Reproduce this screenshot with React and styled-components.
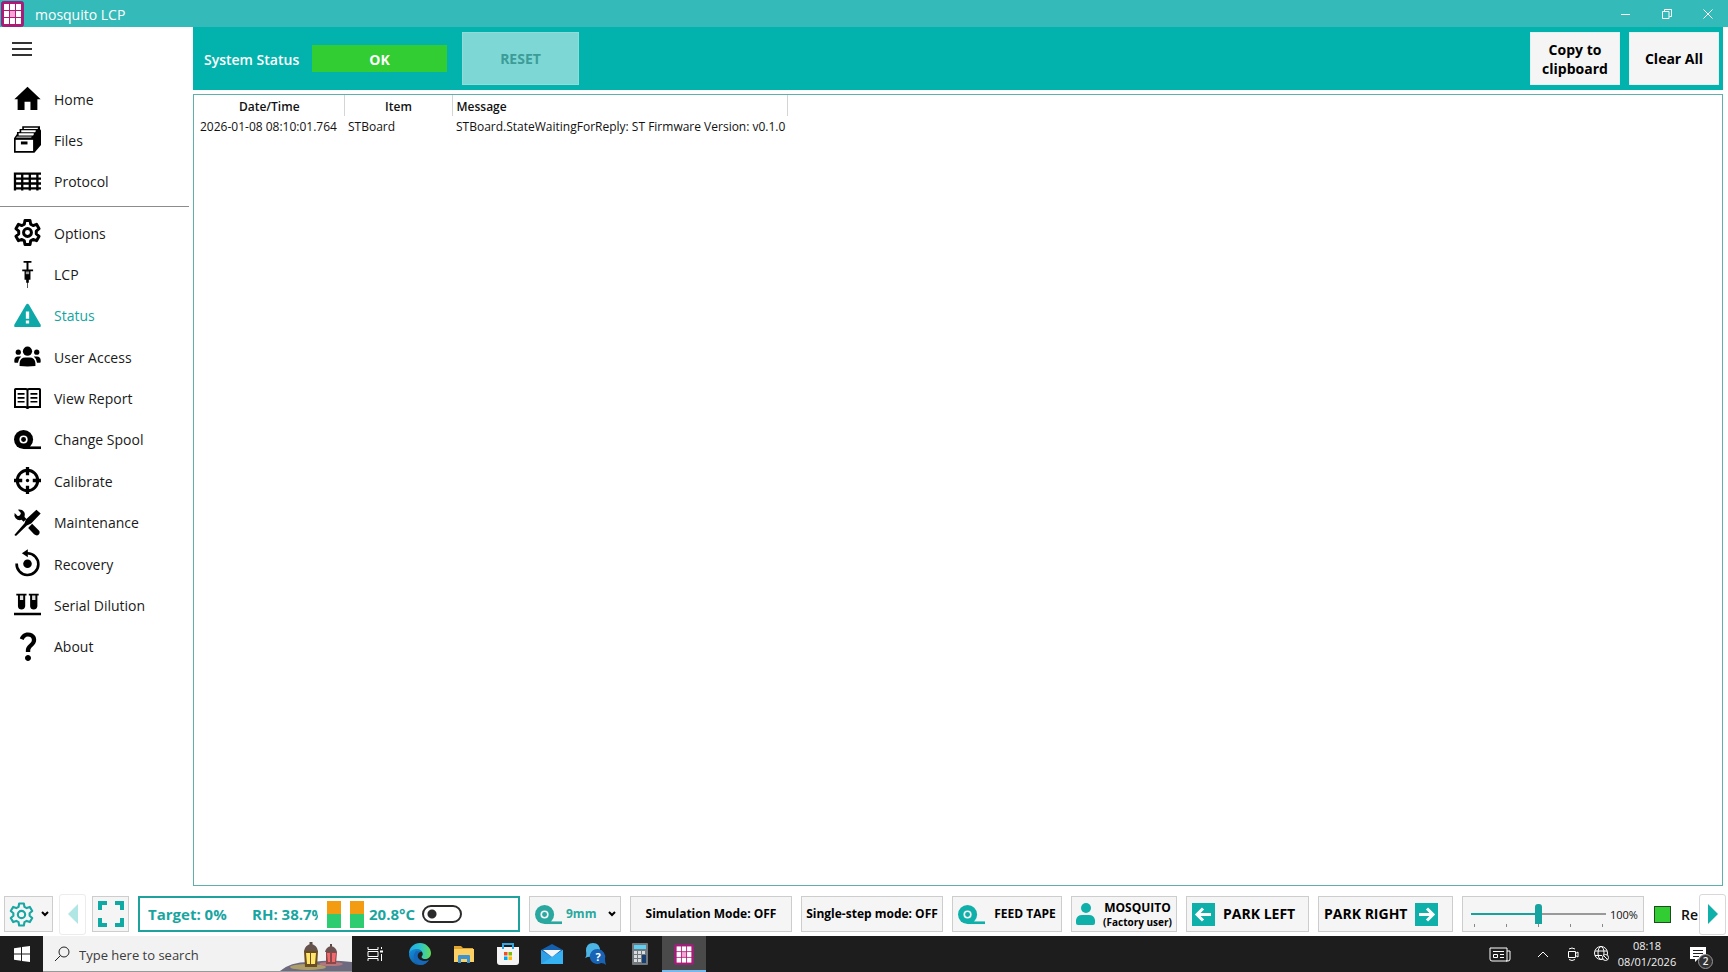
import React, { useState } from 'react';
import styled, { createGlobalStyle } from 'styled-components';
import { MdQuestionMark } from 'react-icons/md';

const TEAL = '#02b3ad';

const GlobalStyle = createGlobalStyle`
    * {
        box-sizing: border-box;
    }

    body {
        margin: 0;
        background: #fff;
        color: #111;
        font-family: "Open Sans", "Noto Sans", sans-serif;
        font-size: 14px;
    }

    button, input {
        font-family: inherit;
        color: inherit;
    }

    svg {
        display: block;
        flex: none;
        overflow: visible;
    }
`;

// Layout
const Window = styled.div`
    display: flex;
    flex-direction: column;
    height: 100vh;
    overflow: hidden;
`;

const TitleBar = styled.header`
    display: flex;
    align-items: center;
    height: 27px;
    flex: none;
    padding-left: 1px;
    background: #35baba;
    color: #fff;
`;

const Title = styled.h1`
    flex: 1;
    margin: 0;
    padding-left: 11px;
    padding-top: 2px;
    font-size: 14px;
    font-weight: 500;
`;

const WindowButton = styled.button`
    display: flex;
    align-items: center;
    justify-content: center;
    width: 41px;
    height: 27px;
    padding: 0;
    border: none;
    background: none;
    color: #fff;
`;

const Body = styled.div`
    display: flex;
    flex: 1;
    min-height: 0;
`;

const Sidebar = styled.nav`
    width: 193px;
    flex: none;
    padding-right: 4px;
`;

const MenuButton = styled.button`
    display: block;
    height: 51px;
    padding: 0 0 7px 12px;
    border: none;
    background: none;
`;

const NavList = styled.ul`
    display: flex;
    flex-direction: column;
    height: ${(props) => props.$height};
    margin: 0;
    padding: 0;
    list-style: none;
`;

const NavItem = styled.li`
    flex: 1;
    display: flex;
`;

const NavLink = styled.a`
    display: flex;
    align-items: center;
    flex: 1;
    gap: 13px;
    padding-left: 14px;
    font-size: 14px;
    text-decoration: none;
    color: ${(props) => (props.$active ? '#12a5a0' : '#1a1a1a')};

    & svg {
        color: ${(props) => (props.$active ? '#0fa8a8' : '#000')};
    }
`;

const NavText = styled.span`
    padding-top: 1px;
`;

const IconBox = styled.span`
    display: flex;
    align-items: center;
    justify-content: center;
    width: 27px;
    height: 27px;
`;

const Divider = styled.hr`
    height: 1px;
    margin: 4px 0 5px;
    border: none;
    background: #8c8c8c;
`;

const Main = styled.main`
    display: flex;
    flex-direction: column;
    flex: 1;
    min-width: 0;
    padding-right: 5px;
`;

const StatusBar = styled.section`
    display: flex;
    align-items: center;
    height: 63px;
    flex: none;
    padding: 0 4px 0 11px;
    background: ${TEAL};
`;

const StatusLabel = styled.span`
    width: 108px;
    padding-top: 2px;
    color: #fff;
    font-size: 14px;
    font-weight: 600;
    white-space: nowrap;
`;

const StatusValue = styled.output`
    width: 135px;
    height: 27px;
    margin-right: 15px;
    background: #32cd32;
    color: #fff;
    font-size: 14px;
    font-weight: 700;
    line-height: 29px;
    text-align: center;
`;

const HeaderActions = styled.div`
    display: flex;
    gap: 9px;
    margin-left: auto;
`;

const HeaderButton = styled.button`
    width: ${(props) => props.$width};
    height: 53px;
    padding: 0;
    border: 1px solid #e2f0f0;
    background: #f5f5f5;
    color: #000;
    font-size: 14px;
    font-weight: 700;
    line-height: 19px;

    &:disabled {
        border-color: #92dbd8;
        background: #7dd7d4;
        color: #3c9c98;
    }
`;

const LogPanel = styled.section`
    flex: 1;
    margin-top: 4px;
    border: 1px solid #5fb0ac;
    overflow: auto;
`;

const LogTable = styled.table`
    border-collapse: collapse;
    table-layout: fixed;
    width: 593px;
    font-size: 12px;

    & th {
        height: 21px;
        padding: 2px 3px 0 4px;
        border-right: 1px solid #d5d5d5;
        font-weight: 600;
    }

    & th:last-child {
        text-align: left;
    }

    & td {
        height: 20px;
        padding: 0 0 0 4px;
        white-space: nowrap;
    }

    & td:first-child {
        padding-left: 6px;
    }
`;

// Bottom tool bar
const ToolBar = styled.footer`
    display: flex;
    align-items: center;
    gap: 9px;
    height: 50px;
    flex: none;
    padding: 6px 2px 0 4px;
    overflow: hidden;
`;

const ViewTools = styled.div`
    display: flex;
    align-items: center;
    gap: 6px;
    flex: none;
`;

const ToolButton = styled.button`
    display: flex;
    align-items: center;
    justify-content: ${(props) => props.$justify || 'center'};
    gap: ${(props) => props.$gap || '8px'};
    width: ${(props) => props.$width};
    height: 36px;
    flex: none;
    padding: ${(props) => props.$padding || '0'};
    border: 1px solid #cdcdcd;
    background: #f5f5f5;
    color: ${(props) => props.$color || '#000'};
    font-size: ${(props) => props.$size || '12px'};
    font-weight: 700;
    line-height: 16px;
    white-space: nowrap;
`;

const ScrollButton = styled.button`
    display: flex;
    align-items: center;
    justify-content: center;
    width: 27px;
    height: 41px;
    flex: none;
    padding: 0;
    border: 1px solid #d8d8d8;
    border-radius: 3px;
    background: #fff;

    &:disabled {
        border-color: #ececec;
    }
`;

const Climate = styled.div`
    display: flex;
    align-items: center;
    flex: 1;
    height: 36px;
    min-width: 0;
    padding-left: 8px;
    border: 2px solid #1fa29e;
    color: #19a59f;
    font-size: 15px;
    font-weight: 700;
    white-space: nowrap;
    overflow: hidden;
`;

const Reading = styled.span`
    flex: none;
    width: ${(props) => props.$width};
    overflow: hidden;
`;

const Gauges = styled.div`
    display: flex;
    gap: 9px;
    padding: 0 5px 0 9px;
`;

const Gauge = styled.span`
    width: 14px;
    height: 27px;
    background: linear-gradient(#f39c12 50%, #2ecc71 50%);
`;

const Toggle = styled.input`
    appearance: none;
    flex: none;
    width: 40px;
    height: 18px;
    margin: 0;
    border: 2px solid #2b2b2b;
    border-radius: 9px;
    background: radial-gradient(circle at 8px 7px, #2b2b2b 4px, #fff 5px);

    &:checked {
        background: radial-gradient(circle at 28px 7px, #2b2b2b 4px, #fff 5px);
    }
`;

const TapeSize = styled.span`
    flex: 1;
    text-align: left;
`;

const Teal = styled.span`
    color: #10b0aa;
`;

const UserText = styled.span`
    text-align: center;
    font-size: 12px;
    line-height: 15px;

    & small {
        display: block;
        font-size: 10px;
        line-height: 14px;
    }
`;

const SliderBox = styled.div`
    display: flex;
    align-items: center;
    gap: 4px;
    width: 182px;
    height: 36px;
    flex: none;
    padding-left: 8px;
    border: 1px solid #cdcdcd;
    background: #f5f5f5;
    font-size: 11px;
`;

const SliderTrack = styled.div`
    width: 135px;
    padding-top: 4px;
`;

const Range = styled.input`
    appearance: none;
    display: block;
    width: 100%;
    height: 20px;
    margin: 0;
    background: linear-gradient(90deg, #14a39e 50%, #999 50%) center / 100% 2px no-repeat;

    &::-webkit-slider-thumb {
        appearance: none;
        width: 7px;
        height: 20px;
        border-radius: 3px 3px 0 0;
        background: #17a39f;
    }
`;

const Ticks = styled.div`
    display: flex;
    justify-content: space-between;
    height: 4px;
    padding: 0 3px;

    & span {
        width: 1px;
        height: 3px;
        background: #888;
    }
`;

const Ready = styled.div`
    display: flex;
    align-items: center;
    gap: 10px;
    width: 44px;
    flex: none;
    margin-left: 1px;
    margin-right: -8px;
    overflow: hidden;
    font-size: 14px;
    font-weight: 600;
`;

const Lamp = styled.span`
    width: 17px;
    height: 17px;
    flex: none;
    border: 1px solid #1d4d1d;
    background: #32cd32;
`;

// Windows task bar
const TaskBar = styled.footer`
    display: flex;
    height: 36px;
    flex: none;
    background: #1d1d1d;
    color: #f2f2f2;
`;

const TaskButton = styled.button`
    display: flex;
    align-items: center;
    justify-content: center;
    width: ${(props) => props.$width || '44px'};
    height: 36px;
    padding: 2px 0 0;
    border: none;
    border-bottom: 2px solid ${(props) => (props.$active ? '#76b9ed' : 'transparent')};
    background: ${(props) => (props.$active ? '#4a4a4a' : 'none')};
    background-clip: padding-box;
    color: #f2f2f2;
`;

const SearchBox = styled.label`
    display: flex;
    align-items: center;
    width: 309px;
    padding-left: 11px;
    border-bottom: 1px solid #999;
    background: #f2f2f2;
    color: #222;
`;

const SearchInput = styled.input`
    flex: 1;
    min-width: 0;
    padding: 2px 0 0 9px;
    border: none;
    background: none;
    font-size: 13px;
    outline: none;

    &::placeholder {
        color: #3c3c3c;
    }
`;

const Tray = styled.div`
    display: flex;
    margin-left: auto;
    padding-right: 9px;
`;

const Clock = styled.time`
    width: 60px;
    font-size: 11px;
    line-height: 16px;
    padding-top: 2px;
    text-align: center;
    white-space: nowrap;
`;

const Notice = styled.span`
    position: relative;
`;

const Badge = styled.span`
    position: absolute;
    left: 8px;
    top: 7px;
    width: 15px;
    height: 15px;
    border: 1px solid #999;
    border-radius: 50%;
    background: #333;
    font-size: 10px;
    font-weight: 600;
    line-height: 13px;
    text-align: center;
`;

// Icons, all drawn on an 82 unit square
const Icon = ({ size = 27, children }) => (
  <svg width={size} height={size} viewBox="0 0 82 82" fill="currentColor" aria-hidden="true">
    {children}
  </svg>
);

const HomeIcon = () => (
  <Icon><path d="M41 5 81 43H71V76H50V51H32V76H11V43H1Z" /></Icon>
);

const FilesIcon = () => (
  <Icon>
    <path d="M0 37 9 24V18H17V9H25V1H79V9L82 14V58L62 81H0Z" />
    <g fill="#fff">
      <path d="M5 42H58V76H5Z" />
      <path d="M30 5H73V7L71 9H30Z" />
      <path d="M22 13H66V16L64 19H22Z" />
      <path d="M14 22H60V26L58 29H14Z" />
      <path d="M9 32H54L52 36H6Z" opacity=".7" />
    </g>
    <path d="M21 47H41V56H21Z" />
  </Icon>
);

const ProtocolIcon = () => (
  <Icon>
    <path d="M3 14V68M25 14V68M48 14V68M71 14V68M0 17H82M0 32H82M0 47H82M0 62H82" fill="none" stroke="currentColor" strokeWidth="7" />
  </Icon>
);

const gearPoints = [0, 60, 120, 180, 240, 300].flatMap((angle) =>
  [[-21, 27], [-12, 37], [12, 37], [21, 27]].map(([turn, r]) => {
    const a = ((angle + turn) * Math.PI) / 180;
    return `${41 + r * Math.sin(a)},${41 - r * Math.cos(a)}`;
  })
).join(' ');

const GearIcon = ({ size, weight = 9 }) => (
  <Icon size={size}>
    <g fill="none" stroke="currentColor" strokeWidth={weight} strokeLinejoin="round">
      <polygon points={gearPoints} />
      <circle cx="41" cy="41" r="12" />
    </g>
  </Icon>
);

const SyringeIcon = () => (
  <Icon>
    <path d="M29 0H53V5H44V26H58V31H50V57H45V66H42V82H40V66H37V57H32V31H25V26H38V5H29Z" />
    <path d="M36 32H46V40H36Z" fill="#999" />
  </Icon>
);

const WarningIcon = () => (
  <Icon>
    <path d="M36 9Q41 2 46 9L81 69Q83 76 77 76H5Q-1 76 1 69Z" />
    <path d="M36 29H46V51H36ZM36 56H46V65H36Z" fill="#fff" />
  </Icon>
);

const UsersIcon = () => (
  <Icon>
    <circle cx="41" cy="25" r="14" />
    <circle cx="13" cy="28" r="8" />
    <circle cx="69" cy="28" r="8" />
    <path d="M17 70V61Q18 44 35 44H47Q64 44 65 61V70Q41 73 17 70ZM1 57V52Q2 41 12 41H22Q13 48 12 60H3Q1 60 1 57ZM81 57V52Q80 41 70 41H60Q69 48 70 60H79Q81 60 81 57Z" />
  </Icon>
);

const ReportIcon = () => (
  <Icon>
    <g fill="none" stroke="currentColor" strokeWidth="6">
      <path d="M3 14Q3 12 5 12H36Q41 12 41 17 41 12 46 12H77Q79 12 79 14V67H48Q41 67 41 73 41 67 34 67H3ZM41 15V70" />
      <path d="M11 27H32M11 39H32M11 51H32M50 27H71M50 39H71M50 51H71" strokeWidth="5" />
    </g>
  </Icon>
);

const SpoolIcon = ({ size, hole = '#fff' }) => (
  <Icon size={size}>
    <circle cx="29" cy="41" r="29" />
    <path d="M29 62H82V70H29Z" />
    <circle cx="29" cy="41" r="10" fill="none" stroke={hole} strokeWidth="5" />
  </Icon>
);

const TargetIcon = () => (
  <Icon>
    <g fill="none" stroke="currentColor" strokeWidth="9">
      <circle cx="41" cy="41" r="31" />
      <path d="M41 0V25M41 57V82M0 41H25M57 41H82" strokeWidth="10" />
    </g>
    <circle cx="41" cy="41" r="5" />
  </Icon>
);

const ToolsIcon = () => (
  <Icon>
    <path d="M68 2 81 14 52 44 39 50 6 82 1 79 32 43 36 32Z" />
    <path d="M55 45 77 67Q80 75 72 80 66 81 61 77L43 58Z" />
    <path d="M12 2Q24 0 31 9 35 16 32 24L38 30 29 39 23 33Q12 36 5 28-1 21 2 12L11 21Q19 22 21 12Z" />
  </Icon>
);

const RecoveryIcon = () => (
  <Icon>
    <path d="M8 41A33 33 0 1 0 41 10H36" fill="none" stroke="currentColor" strokeWidth="8" />
    <path d="M24 10 42-2V22Z" />
    <circle cx="41" cy="42" r="13" />
  </Icon>
);

const TubesIcon = () => (
  <Icon>
    <path d="M7 8H38V14H34V46Q32 56 23 56 13 56 12 46V14H7ZM45 8H75V14H71V46Q69 56 60 56 50 56 49 46V14H45ZM0 66H82V74H0Z" />
    <path d="M18 14H28V27H18ZM55 14H65V27H55Z" fill="#ddd" />
  </Icon>
);

const GridLogo = ({ width, height }) => (
  <svg width={width} height={height} viewBox="0 0 23 26" preserveAspectRatio="none" aria-hidden="true">
    <rect x=".5" y=".5" width="22" height="25" rx="2" fill="#b01873" stroke="#8a2a86" />
    {[3, 9, 15].map((x) => [3, 10, 17].map((y) => (
      <rect key={`${x}-${y}`} x={x} y={y} width="5" height="6" fill={x === 9 && y === 10 ? '#f5a6d6' : '#fff'} />
    )))}
  </svg>
);

const Chevron = () => (
  <svg width="8" height="6" viewBox="0 0 8 6" fill="none" stroke="#000" strokeWidth="2" aria-hidden="true">
    <path d="M1 1 4 4 7 1" />
  </svg>
);

const Arrow = ({ flip }) => (
  <svg width="23" height="23" viewBox="0 0 23 23" aria-hidden="true">
    <rect width="23" height="23" fill="#10b0aa" />
    <path d={flip ? 'M4 11.500H18M12 5.500 18 11.500 12 17.500' : 'M19 11.500H5M11 5.500 5 11.500 11 17.500'} fill="none" stroke="#fff" strokeWidth="3" />
  </svg>
);

const Lanterns = () => (
  <svg width="75" height="35" viewBox="0 0 75 35" aria-hidden="true">
    <path d="M3 35Q14 25 36 26 52 23 75 26V35Z" fill="#6d6a80" />
    <ellipse cx="31" cy="31" rx="18" ry="3" fill="#c9b45f" opacity=".7" />
    <ellipse cx="54" cy="28" rx="12" ry="2" fill="#c9787a" opacity=".8" />
    <path d="M34 6V9" stroke="#5b4a44" strokeWidth="3" />
    <path d="M27 15Q28 9 34 8 40 9 41 15Z" fill="#65524c" />
    <path d="M27 15H41L40 31H28Z" fill="#6a4e1f" />
    <path d="M29 17H33V28H30ZM34 17H39L38 28H34Z" fill="#ffe66b" />
    <path d="M54 8V12" stroke="#5b4a44" strokeWidth="2" />
    <path d="M48 16Q49 11 54 10 59 11 60 16Z" fill="#6b5250" />
    <path d="M49 16H60L59 28H49Z" fill="#8c4848" />
    <path d="M50 17H53V26H51ZM55 17H59L58 26H55Z" fill="#f0696d" />
  </svg>
);

const WindowsIcon = () => (
  <svg width="16" height="16" viewBox="0 0 16 16" fill="#fff" aria-hidden="true">
    <path d="M0 2.300 7 1.200V7.500H0ZM8 1 16 0V7.500H8ZM0 8.500H7V14.800L0 13.700ZM8 8.500H16V16L8 15Z" />
  </svg>
);

const TaskViewIcon = () => (
  <svg width="16" height="16" viewBox="0 0 16 16" fill="none" stroke="#fff" aria-hidden="true">
    <path d="M1 1V3.500H11V1M1 15V12.500H11V15M1 5.500H11V10.500H1ZM14.500 1V3M14.500 8V15" />
    <path d="M13 5.500H16" strokeWidth="2" />
  </svg>
);

const EdgeIcon = () => (
  <svg width="22" height="22" viewBox="0 0 22 22" aria-hidden="true">
    <defs>
      <linearGradient id="edgeTop" x1="0" x2="1">
        <stop offset="0" stopColor="#1ea7e8" />
        <stop offset=".55" stopColor="#2fc6c6" />
        <stop offset="1" stopColor="#62dc55" />
      </linearGradient>
      <linearGradient id="edgeLow" x1="0" x2="1" y2="1">
        <stop offset="0" stopColor="#1490df" />
        <stop offset="1" stopColor="#114a8b" />
      </linearGradient>
    </defs>
    <path d="M0 11C0 4 5 0 11 0S22 5 22 10C22 14 19 16 16 16 13 16 12 14 13 13 15 11 13 7 9 7 5 7 1 9 0 11Z" fill="url(#edgeTop)" />
    <path d="M0 11C1 7 5 6 8 6 11 6 13 8 13 9 9 8 7 12 9 15 11 19 17 19 20 17 18 20 15 22 11 22 5 22 0 17 0 11Z" fill="url(#edgeLow)" />
    <path d="M7 8C3 12 5 20 11 22 15 22 18 20 20 17 16 19 11 18 9 15 8 12 9 10 11 9 10 8 8 8 7 8Z" fill="#1668ba" />
  </svg>
);

const ExplorerIcon = () => (
  <svg width="20" height="18" viewBox="0 0 20 18" aria-hidden="true">
    <path d="M0 1H7L9 3H19V7H0Z" fill="#e0a52f" />
    <path d="M0 4H20V17H0Z" fill="#fbd165" />
    <path d="M4 18V11Q4 10 5 10H15Q16 10 16 11V18H13V14H7V18Z" fill="#3c93d0" />
  </svg>
);

const StoreIcon = () => (
  <svg width="22" height="22" viewBox="0 0 22 22" aria-hidden="true">
    <path d="M6 6V1H16V6" fill="none" stroke="#35a5e4" strokeWidth="2" />
    <path d="M0 4H22V19Q22 22 19 22H3Q0 22 0 19Z" fill="#f4f4f4" />
    <path d="M6 4V6M16 4V6" stroke="#35a5e4" strokeWidth="2" />
    <path d="M7 9H10.500V12.500H7Z" fill="#f25022" />
    <path d="M11.500 9H15V12.500H11.500Z" fill="#7fba00" />
    <path d="M7 13.500H10.500V17H7Z" fill="#00a4ef" />
    <path d="M11.500 13.500H15V17H11.500Z" fill="#ffb900" />
  </svg>
);

const MailIcon = () => (
  <svg width="22" height="20" viewBox="0 0 22 20" aria-hidden="true">
    <path d="M0 6 11 0 22 6V12H0Z" fill="#1560ac" />
    <path d="M0 6V20H22V6L11 13Z" fill="#2f9fe6" />
    <path d="M0 20 22 6V20Z" fill="#36b2f2" />
    <path d="M2 6H20L11 13Z" fill="#f2f6fa" />
  </svg>
);

const HelpIcon = () => (
  <svg width="22" height="22" viewBox="0 0 22 22" aria-hidden="true">
    <path d="M0 15Q2 13 1 8 1 0 8 0 15 0 15 8 14 14 8 14 4 13 0 15Z" fill="#4db5e4" />
    <path d="M13 6A7.500 7.500 0 1 0 16 20Q19 20 21 22 20 19 20 16A8 8 0 0 0 13 6Z" fill="#1763b6" />
    <text x="13" y="18" fill="#fff" fontSize="11" fontWeight="700" textAnchor="middle">?</text>
  </svg>
);

const CalculatorIcon = () => (
  <svg width="16" height="22" viewBox="0 0 16 22" aria-hidden="true">
    <rect width="16" height="22" rx="1" fill="#71797f" />
    <path d="M2 2H14V6H2Z" fill="#5ed0f2" />
    {[2, 6, 10].map((x) => [8, 12, 16].map((y) => (
      <rect key={`${x}-${y}`} x={x} y={y} width="3" height="3" fill="#d9dcdf" />
    )))}
    <path d="M10 12H14V20H10Z" fill="#183f72" />
  </svg>
);

const NewsIcon = () => (
  <svg width="22" height="15" viewBox="0 0 22 15" fill="none" stroke="#fff" aria-hidden="true">
    <path d="M1 1H18V14H3Q1 14 1 12ZM18 4H21V12Q21 14 19 14H17M4 4.500H15M11 7.500H15M11 10.500H15" />
    <path d="M4.500 7.500H8.500V10.500H4.500Z" />
  </svg>
);

const CameraIcon = () => (
  <svg width="12" height="14" viewBox="0 0 12 14" fill="none" stroke="#fff" aria-hidden="true">
    <path d="M1.500 4.500H8.500V10.500H1.500ZM8.500 6.500 11 5V10L8.500 8.500M2 2Q5 0 8 2M2 12.500Q5 14.500 8 12.500" />
  </svg>
);

const GlobeIcon = () => (
  <svg width="16" height="16" viewBox="0 0 16 16" fill="none" stroke="#fff" aria-hidden="true">
    <circle cx="7" cy="7" r="6.500" />
    <ellipse cx="7" cy="7" rx="3" ry="6.500" />
    <path d="M1 5H13M1 9.500H8" />
    <circle cx="11.500" cy="11.500" r="3" fill="#1d1d1d" />
    <path d="M9.500 9.500 13.500 13.500" />
  </svg>
);

const mainLinks = [
  { label: 'Home', icon: <HomeIcon /> },
  { label: 'Files', icon: <FilesIcon /> },
  { label: 'Protocol', icon: <ProtocolIcon /> },
];

const toolLinks = [
  { label: 'Options', icon: <GearIcon /> },
  { label: 'LCP', icon: <SyringeIcon /> },
  { label: 'Status', icon: <WarningIcon /> },
  { label: 'User Access', icon: <UsersIcon /> },
  { label: 'View Report', icon: <ReportIcon /> },
  { label: 'Change Spool', icon: <SpoolIcon /> },
  { label: 'Calibrate', icon: <TargetIcon /> },
  { label: 'Maintenance', icon: <ToolsIcon /> },
  { label: 'Recovery', icon: <RecoveryIcon /> },
  { label: 'Serial Dilution', icon: <TubesIcon /> },
  { label: 'About', icon: <MdQuestionMark size={36} /> },
];

const taskApps = [
  { label: 'Task View', icon: <TaskViewIcon />, width: '46px' },
  { label: 'Edge', icon: <EdgeIcon /> },
  { label: 'File Explorer', icon: <ExplorerIcon /> },
  { label: 'Store', icon: <StoreIcon /> },
  { label: 'Mail', icon: <MailIcon /> },
  { label: 'Get Help', icon: <HelpIcon /> },
  { label: 'Calculator', icon: <CalculatorIcon /> },
  { label: 'mosquito LCP', icon: <GridLogo width={20} height={21} />, active: true },
];

const NavGroup = ({ links, height }) => (
  <NavList $height={height}>
    {links.map(({ label, icon }) => (
      <NavItem key={label}>
        <NavLink href="#/" $active={label === 'Status'}>
          <IconBox>{icon}</IconBox>
          <NavText>{label}</NavText>
        </NavLink>
      </NavItem>
    ))}
  </NavList>
);

const AppToolBar = () => {
  const [speed, setSpeed] = useState(50);

  return (
    <ToolBar>
      <ViewTools>
        <ToolButton $width="49px" $gap="7px" $color="#18a7a3" aria-label="Settings">
          <GearIcon size={25} weight={7} />
          <Chevron />
        </ToolButton>
        <ScrollButton disabled aria-label="Scroll left">
          <svg width="10" height="20" viewBox="0 0 10 20"><path d="M10 0V20L0 10Z" fill="#b0e7e4" /></svg>
        </ScrollButton>
        <ToolButton $width="37px" $color="#10aaa5" aria-label="Full screen">
          <svg width="26" height="26" viewBox="0 0 26 26" fill="none" stroke="currentColor" strokeWidth="4">
            <path d="M2 9V2H9M17 2H24V9M24 17V24H17M9 24H2V17" />
          </svg>
        </ToolButton>
      </ViewTools>
      <Climate>
        <Reading $width="104px">Target: 0%</Reading>
        <Reading $width="66px">RH: 38.7%</Reading>
        <Gauges>
          <Gauge />
          <Gauge />
        </Gauges>
        <Reading $width="53px">20.8°C</Reading>
        <Toggle type="checkbox" aria-label="Humidity control" />
      </Climate>
      <ToolButton $width="92px" $gap="4px" $padding="0 4px 0 5px" $color="#2aa8a0">
        <SpoolIcon size={27} hole="#f5f5f5" />
        <TapeSize>9mm</TapeSize>
        <Chevron />
      </ToolButton>
      <ToolButton $width="162px">Simulation Mode: OFF</ToolButton>
      <ToolButton $width="142px">Single-step mode: OFF</ToolButton>
      <ToolButton $width="110px" $gap="9px">
        <Teal><SpoolIcon size={27} hole="#f5f5f5" /></Teal>
        FEED TAPE
      </ToolButton>
      <ToolButton $width="106px" $gap="8px">
        <Teal>
          <svg width="19" height="22" viewBox="0 0 19 22" fill="currentColor">
            <circle cx="10" cy="5" r="5" />
            <path d="M0 20V17Q1 12 6 12H13Q18 12 19 17V20Q19 22 17 22H2Q0 22 0 20Z" />
          </svg>
        </Teal>
        <UserText>MOSQUITO<small>(Factory user)</small></UserText>
      </ToolButton>
      <ToolButton $width="123px" $size="14px" $justify="flex-start" $padding="0 5px">
        <Arrow />
        PARK LEFT
      </ToolButton>
      <ToolButton $width="135px" $size="14px" $justify="flex-start" $padding="0 5px">
        PARK RIGHT
        <Arrow flip />
      </ToolButton>
      <SliderBox>
        <SliderTrack>
          <Range
            type="range"
            aria-label="Speed"
            value={speed}
            onChange={(e) => setSpeed(e.target.value)}
          />
          <Ticks><span /><span /><span /><span /><span /></Ticks>
        </SliderTrack>
        100%
      </SliderBox>
      <Ready><Lamp />Ready</Ready>
      <ScrollButton aria-label="Scroll right">
        <svg width="10" height="20" viewBox="0 0 10 20"><path d="M0 0V20L10 10Z" fill="#10b0aa" /></svg>
      </ScrollButton>
    </ToolBar>
  );
};

const App = () => {
  return (
    <Window>
      <GlobalStyle />
      <TitleBar>
        <GridLogo width={23} height={26} />
        <Title>mosquito LCP</Title>
        <WindowButton aria-label="Minimize">
          <svg width="10" height="10" stroke="currentColor"><path d="M0 5.500H9" /></svg>
        </WindowButton>
        <WindowButton aria-label="Restore">
          <svg width="10" height="10" fill="none" stroke="currentColor"><path d="M.5 2.500H7V9.500H.5ZM2.500 2V.5H9.500V7.500H7.500" /></svg>
        </WindowButton>
        <WindowButton aria-label="Close">
          <svg width="10" height="10" stroke="currentColor"><path d="M.5 .5 9.500 9.500M9.500 .5.5 9.500" /></svg>
        </WindowButton>
      </TitleBar>

      <Body>
        <Sidebar>
          <MenuButton aria-label="Menu">
            <svg width="20" height="14" stroke="#333" strokeWidth="2"><path d="M0 1H20M0 7H20M0 13H20" /></svg>
          </MenuButton>
          <NavGroup links={mainLinks} height="124px" />
          <Divider />
          <NavGroup links={toolLinks} height="455px" />
        </Sidebar>

        <Main>
          <StatusBar>
            <StatusLabel>System Status</StatusLabel>
            <StatusValue>OK</StatusValue>
            <HeaderButton $width="117px" disabled>RESET</HeaderButton>
            <HeaderActions>
              <HeaderButton $width="90px">Copy to<br />clipboard</HeaderButton>
              <HeaderButton $width="90px">Clear All</HeaderButton>
            </HeaderActions>
          </StatusBar>

          <LogPanel>
            <LogTable>
              <colgroup>
                <col style={{ width: 150 }} />
                <col style={{ width: 108 }} />
                <col style={{ width: 335 }} />
              </colgroup>
              <thead>
                <tr>
                  <th>Date/Time</th>
                  <th>Item</th>
                  <th>Message</th>
                </tr>
              </thead>
              <tbody>
                <tr>
                  <td>2026-01-08 08:10:01.764</td>
                  <td>STBoard</td>
                  <td>STBoard.StateWaitingForReply: ST Firmware Version: v0.1.0</td>
                </tr>
              </tbody>
            </LogTable>
          </LogPanel>
        </Main>
      </Body>

      <AppToolBar />

      <TaskBar>
        <TaskButton $width="43px" aria-label="Start"><WindowsIcon /></TaskButton>
        <SearchBox>
          <svg width="16" height="16" fill="none" stroke="#222"><circle cx="10" cy="6" r="5" /><path d="M6.500 9.500 1 15" /></svg>
          <SearchInput type="text" placeholder="Type here to search" aria-label="Search" />
          <Lanterns />
        </SearchBox>
        {taskApps.map(({ label, icon, active, width }) => (
          <TaskButton key={label} $active={active} $width={width} aria-label={label}>{icon}</TaskButton>
        ))}
        <Tray>
          <TaskButton $width="54px" aria-label="News"><NewsIcon /></TaskButton>
          <TaskButton $width="32px" aria-label="Hidden icons">
            <svg width="12" height="7" fill="none" stroke="#fff"><path d="M1 6 6 1 11 6" /></svg>
          </TaskButton>
          <TaskButton $width="28px" aria-label="Camera"><CameraIcon /></TaskButton>
          <TaskButton $width="30px" aria-label="Network"><GlobeIcon /></TaskButton>
          <Clock>08:18<br />08/01/2026</Clock>
          <TaskButton $width="42px" aria-label="Notifications">
            <Notice>
              <svg width="16" height="15" viewBox="0 0 16 15"><path d="M0 0H16V12H8L5 15V12H0Z" fill="#fff" /><path d="M3 3.500H13M3 6.500H13M3 9.500H9" stroke="#222" /></svg>
              <Badge>2</Badge>
            </Notice>
          </TaskButton>
        </Tray>
      </TaskBar>
    </Window>
  );
};

export default App;
